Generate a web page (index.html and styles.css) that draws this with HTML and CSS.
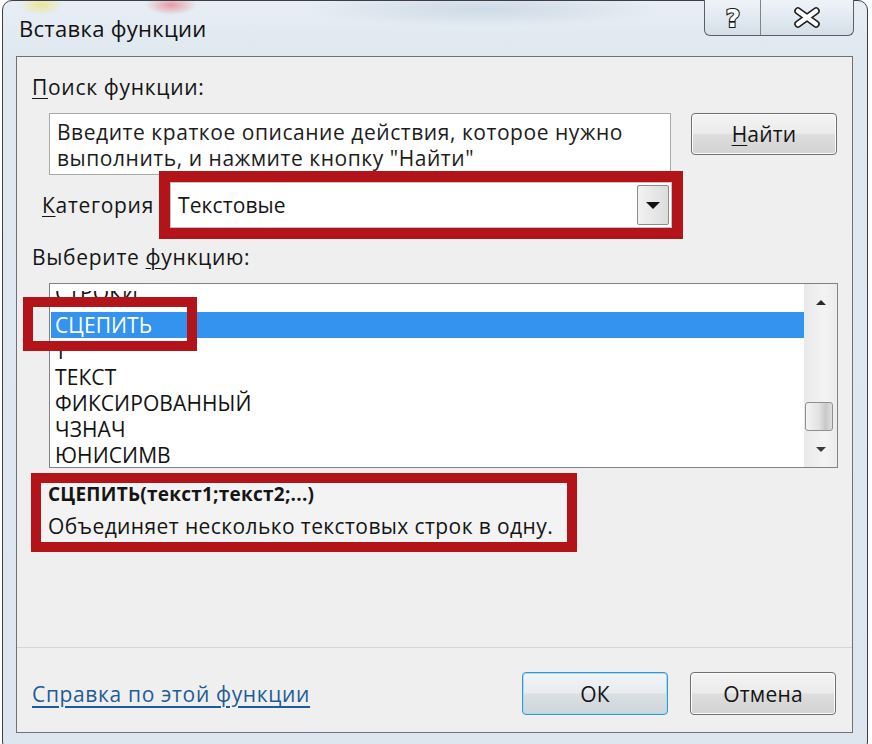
FILE: index.html
```html
<!DOCTYPE html>
<html lang="ru">
<head>
<meta charset="utf-8">
<title>Вставка функции</title>
<link rel="stylesheet" href="styles.css">
</head>
<body>
<div class="window">
  <div class="titlebar">
    <div class="title">Вставка функции</div>
    <div class="caption-btns">
      <div class="cbtn help">
        <svg width="24" height="30" viewBox="0 0 24 30"><text x="12" y="24" text-anchor="middle" class="qmark">?</text></svg>
      </div>
      <div class="cbtn close">
        <svg width="30" height="22" viewBox="0 0 30 22">
          <path d="M6 4 L24 17 M24 4 L6 17" stroke="#1c1c1c" stroke-width="7.5" stroke-linecap="round" fill="none"/>
          <path d="M6 4 L24 17 M24 4 L6 17" stroke="#ffffff" stroke-width="4.5" stroke-linecap="round" fill="none"/>
        </svg>
      </div>
    </div>
  </div>
  <div class="client">
    <div class="label"><u>П</u>оиск функции:</div>
    <div class="search-row">
      <div class="search-box">Введите краткое описание действия, которое нужно<br>выполнить, и нажмите кнопку "Найти"</div>
      <div class="btn"><u>Н</u>айти</div>
    </div>
    <div class="cat-row">
      <span class="cat-label"><u>К</u>атегория</span>
      <div class="select">
        <span class="select-text">Текстовые</span>
        <span class="drop"><span class="tri-down"></span></span>
      </div>
    </div>
    <div class="label label-fn">Выберите <u>ф</u>ункцию:</div>
    <div class="listbox">
      <div class="items-wrap">
        <div class="items">
          <div class="item cut">СТРОКИ</div>
          <div class="item sel"><span class="focus">СЦЕПИТЬ</span></div>
          <div class="item">Т</div>
          <div class="item">ТЕКСТ</div>
          <div class="item">ФИКСИРОВАННЫЙ</div>
          <div class="item">ЧЗНАЧ</div>
          <div class="item">ЮНИСИМВ</div>
        </div>
      </div>
      <div class="scrollbar">
        <div class="sb-btn sb-up"><span class="arr-up"></span></div>
        <div class="sb-track"><div class="thumb"></div></div>
        <div class="sb-btn sb-down"><span class="arr-down"></span></div>
      </div>
      <div class="mark"></div>
    </div>
    <div class="desc">
      <div class="desc-sig">СЦЕПИТЬ(текст1;текст2;...)</div>
      <div class="desc-text">Объединяет несколько текстовых строк в одну.</div>
    </div>
    <div class="footer">
      <span class="help-link">Справка по этой функции</span>
      <div class="btn default">ОК</div>
      <div class="btn cancel">Отмена</div>
    </div>
  </div>
</div>
</body>
</html>
```
FILE: styles.css
```css
* { box-sizing: border-box; }
html, body { margin: 0; padding: 0; }
body {
  width: 872px;
  height: 744px;
  overflow: hidden;
  background: #ffffff;
  font-family: "Open Sans", "DejaVu Sans", sans-serif;
  color: #151515;
}
u { text-decoration: underline; text-underline-offset: 3px; text-decoration-thickness: 1px; }

.window {
  margin-left: 2px;
  width: 866px;
  height: 752px;
  border: 1px solid #3d3f44;
  border-radius: 10px;
  padding: 0 14px 0 13px;
  display: flex;
  flex-direction: column;
  background:
    radial-gradient(ellipse 22px 10px at 38px 4px, rgba(238, 226, 120, 0.75), rgba(238, 226, 120, 0) 100%),
    radial-gradient(ellipse 26px 10px at 168px 4px, rgba(230, 120, 130, 0.7), rgba(230, 120, 130, 0) 100%),
    radial-gradient(ellipse 180px 18px at 480px 8px, rgba(190, 205, 220, 0.6), rgba(190, 205, 220, 0) 100%),
    linear-gradient(#e7eef5, #dfe7ef 60px, #dde6ef);
}

.titlebar {
  height: 55px;
  display: flex;
  justify-content: space-between;
  align-items: flex-start;
}
.title {
  margin-top: 12px;
  padding-left: 3px;
  font-size: 22px;
  letter-spacing: 0.3px;
  line-height: 30px;
  color: #111;
}
.caption-btns {
  display: flex;
  margin-top: -1px;
  margin-right: -1px;
  height: 36px;
  border: 1px solid #5a6068;
  border-top: none;
  border-radius: 0 0 6px 6px;
  background: linear-gradient(#eef3f8, #dfe7ef 60%, #d5dee8);
  overflow: hidden;
}
.cbtn {
  display: flex;
  align-items: center;
  justify-content: center;
}
.help { width: 56px; border-right: 1px solid #7d858e; }
.close { width: 92px; }
.qmark {
  font-family: "DejaVu Sans", sans-serif;
  font-weight: bold;
  font-size: 25px;
  fill: #ffffff;
  stroke: #1a1a1a;
  stroke-width: 2.2px;
  paint-order: stroke fill;
}

.client {
  height: 677px;
  border: 1px solid #6e7177;
  background: #f0efef;
  padding: 17px 15px 0 15px;
  display: flex;
  flex-direction: column;
}

.label {
  font-size: 21px;
  letter-spacing: 0.7px;
  line-height: 26px;
}

.search-row {
  margin-top: 13px;
  display: flex;
  justify-content: space-between;
  align-items: flex-start;
}
.search-box {
  margin-left: 17px;
  width: 622px;
  height: 62px;
  border: 1px solid #a9a9a9;
  background: #ffffff;
  padding: 5px 7px 0 7px;
  font-size: 21px;
  line-height: 26px;
  letter-spacing: 0.55px;
  white-space: nowrap;
  color: #1c1c1c;
}

.btn {
  width: 146px;
  height: 42px;
  border: 1px solid #707070;
  border-radius: 4px;
  background: linear-gradient(#f4f4f4, #ebebeb 48%, #dddddd 52%, #d3d3d3);
  box-shadow: inset 0 0 0 1px #fcfcfc;
  display: flex;
  align-items: center;
  justify-content: center;
  font-size: 21px;
  letter-spacing: 0.2px;
  color: #151515;
}

.cat-row {
  margin-top: 7px;
  display: flex;
  align-items: center;
  height: 46px;
}
.cat-label {
  margin-left: 10px;
  width: 128px;
  font-size: 21px;
  letter-spacing: 0.7px;
  line-height: 26px;
}
.select {
  width: 502px;
  height: 46px;
  background: #ffffff;
  border: 1px solid #c4c4c4;
  outline: 11px solid #b3141a;
  display: flex;
  align-items: center;
  justify-content: space-between;
  padding: 0 2px 0 7px;
  font-size: 21px;
  letter-spacing: 0.1px;
}
.drop {
  width: 32px;
  height: 40px;
  border: 1px solid #8c8c8c;
  border-radius: 2px;
  background: linear-gradient(to right, #f2f2f2, #dcdcdc);
  display: flex;
  align-items: center;
  justify-content: center;
}
.tri-down {
  width: 0; height: 0;
  border-left: 7px solid transparent;
  border-right: 7px solid transparent;
  border-top: 7px solid #111;
}

.label-fn { margin-top: 16px; }

.listbox {
  position: relative;
  margin-top: 13px;
  margin-left: 17px;
  margin-right: -1px;
  height: 185px;
  border: 1px solid #7f8389;
  background: #ffffff;
  display: flex;
}
.items-wrap {
  flex: 1;
  padding-top: 7px;
  display: flex;
}
.items {
  flex: 1;
  clip-path: inset(0 0 -20px 0);
  padding-left: 1px;
}
.item {
  height: 26px;
  line-height: 24px;
  padding: 1px 0 0 4px;
  font-size: 21px;
  letter-spacing: 0.1px;
  white-space: nowrap;
  color: #121212;
}
.item.cut {
  height: 21px;
  padding-top: 0;
  line-height: 2px;
}
.item.sel {
  background: #3393ee;
  color: #ffffff;
}
.focus {
  border-bottom: 1px dotted #ffffff;
}

.scrollbar {
  width: 33px;
  display: flex;
  flex-direction: column;
  background: linear-gradient(to right, #e9e9e9, #f3f3f3 60%, #ececec);
}
.sb-btn {
  display: flex;
  align-items: center;
  justify-content: center;
}
.sb-up { height: 38px; }
.sb-down { height: 36px; }
.sb-track {
  flex: 1;
  padding-top: 81px;
  padding-left: 1px;
}
.thumb {
  width: 28px;
  height: 29px;
  border: 1px solid #8f8f8f;
  border-radius: 3px;
  background: linear-gradient(to right, #f4f4f4, #e2e2e2 50%, #c9c9c9 75%, #dedede);
}
.arr-up, .arr-down {
  width: 0; height: 0;
  border-left: 5px solid transparent;
  border-right: 5px solid transparent;
}
.arr-up { border-bottom: 5px solid #2a2a2a; }
.arr-down { border-top: 5px solid #3a3a3a; }

.mark {
  position: absolute;
  left: -27px;
  top: 13px;
  width: 174px;
  height: 54px;
  border: 10px solid #b3141a;
}

.desc {
  margin-top: 15px;
  margin-left: 9px;
  width: 526px;
  background: #f4f3f3;
  outline: 10px solid #b3141a;
  padding: 0 0 5px 7px;
}
.desc-sig {
  font-weight: bold;
  font-size: 19px;
  line-height: 22px;
  letter-spacing: 0.25px;
}
.desc-text {
  margin-top: 10px;
  font-size: 21px;
  line-height: 22px;
  letter-spacing: 0.4px;
}

.footer {
  margin: auto -15px 0 -15px;
  padding: 24px 16px 17px 15px;
  border-top: 1px solid #d6d6d6;
  display: flex;
  align-items: center;
}
.help-link {
  flex: 1;
  font-size: 21px;
  letter-spacing: 0.65px;
  color: #1d5c97;
  text-decoration: underline;
  text-underline-offset: 4px;
}
.footer .btn { height: 43px; }
.btn.default {
  margin-right: 22px;
  border: 1px solid #3a95c8;
  box-shadow: inset 0 0 0 1px #a6dcf4;
  background: linear-gradient(#f2f5f7, #e8ecee 48%, #d9dfe3 52%, #cfd6db);
}
```
